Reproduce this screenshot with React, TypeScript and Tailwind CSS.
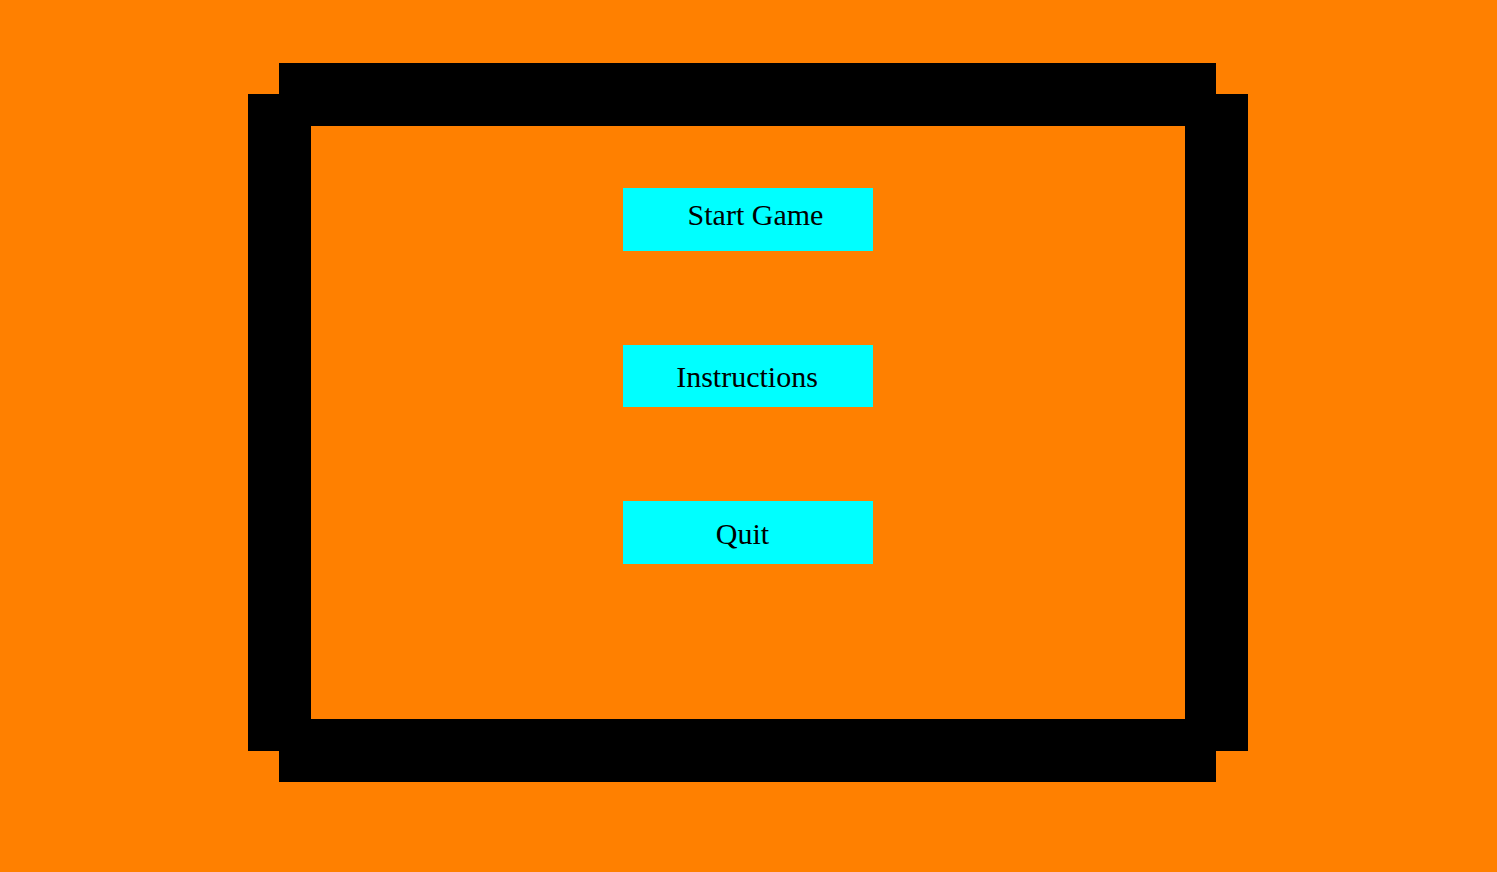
export default function App() {
    return (
        <div className="min-h-screen bg-[#ff8000] pt-[63px] pl-[248px] font-['Liberation_Serif',serif]">
            {/* frame, with notched corners */}
            <div className="w-[1000px]">
                <div className="h-[31px] ml-[31px] mr-[32px] bg-black" />
                <div className="h-[657px] bg-black px-[63px] py-[32px]">
                    <div className="h-full bg-[#ff8000] flex flex-col items-center pt-[62px] gap-[94px]">
                        <button className="w-[250px] h-[62.5px] bg-[#00ffff] text-black text-[30px] flex items-center justify-center pl-[15px] pb-[10px]">
                            Start Game
                        </button>
                        <button className="w-[250px] h-[62.5px] bg-[#00ffff] text-black text-[30px] flex items-center justify-center pr-[2px] pt-[2px]">
                            Instructions
                        </button>
                        <button className="w-[250px] h-[62.5px] bg-[#00ffff] text-black text-[30px] flex items-center justify-center pr-[11px] pt-[2px]">
                            Quit
                        </button>
                    </div>
                </div>
                <div className="h-[31px] ml-[31px] mr-[32px] bg-black" />
            </div>
        </div>
    )
}
